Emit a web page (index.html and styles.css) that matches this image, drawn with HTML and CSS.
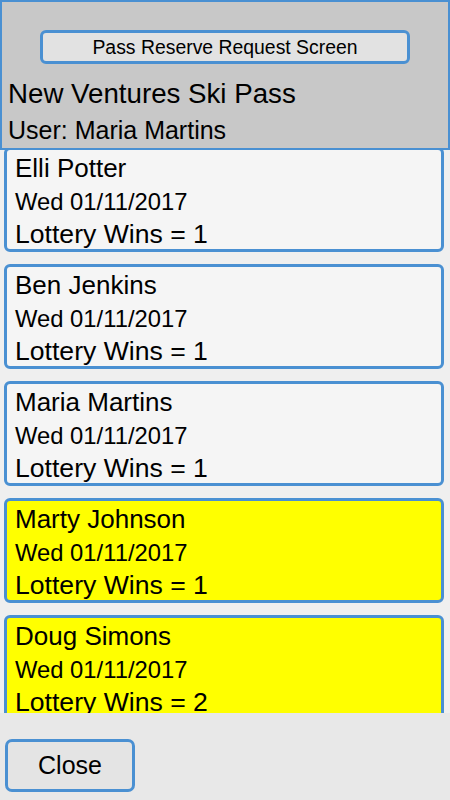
FILE: index.html
```html
<!DOCTYPE html>
<html lang="en">
<head>
    <meta charset="UTF-8">
    <meta name="viewport" content="width=device-width, initial-scale=1.0">
    <title>Pass Reserve Request</title>
    <link rel="stylesheet" href="styles.css">
</head>
<body>
    <div class="screen">
        <div class="header">
            <button class="title-button">Pass Reserve Request Screen</button>
            <div class="app-title">New Ventures Ski Pass</div>
            <div class="user-line">User: Maria Martins</div>
        </div>
        <div class="request-list">
            <div class="request-card">
                <div class="name">Elli Potter</div>
                <div class="date">Wed 01/11/2017</div>
                <div class="wins">Lottery Wins = 1</div>
            </div>
            <div class="request-card">
                <div class="name">Ben Jenkins</div>
                <div class="date">Wed 01/11/2017</div>
                <div class="wins">Lottery Wins = 1</div>
            </div>
            <div class="request-card">
                <div class="name">Maria Martins</div>
                <div class="date">Wed 01/11/2017</div>
                <div class="wins">Lottery Wins = 1</div>
            </div>
            <div class="request-card highlighted">
                <div class="name">Marty Johnson</div>
                <div class="date">Wed 01/11/2017</div>
                <div class="wins">Lottery Wins = 1</div>
            </div>
            <div class="request-card highlighted">
                <div class="name">Doug Simons</div>
                <div class="date">Wed 01/11/2017</div>
                <div class="wins">Lottery Wins = 2</div>
            </div>
        </div>
        <div class="footer">
            <button class="close-button">Close</button>
        </div>
    </div>
</body>
</html>
```

FILE: styles.css
```css
body {
    margin: 0;
    font-family: "Liberation Sans", Arial, sans-serif;
    color: black;
    background-color: #efefef;
}

.screen {
    display: flex;
    flex-direction: column;
    width: 450px;
    height: 800px;
    overflow: hidden;
}

/* верхня сіра панель */
.header {
    height: 150px;
    box-sizing: border-box;
    background-color: #c8c8c8;
    border: 2px solid #4a90d2;
    padding: 0 0 0 6px;
    display: flex;
    flex-direction: column;
}

.title-button {
    align-self: flex-start;
    margin: 28px 0 0 32px;
    width: 370px;
    height: 34px;
    box-sizing: border-box;
    background-color: #e2e2e2;
    border: 3px solid #4a90d2;
    border-radius: 6px;
    font-family: inherit;
    font-size: 19.4px;
    color: black;
    padding: 0;
}

.app-title {
    margin-top: 13px;
    font-size: 27.7px;
    line-height: 34px;
}

.user-line {
    margin-top: 1px;
    font-size: 25px;
    line-height: 36px;
}

/* список запитів */
.request-list {
    height: 563px;
    overflow: hidden;
    padding: 0 6px 0 4px;
}

.request-card {
    height: 105px;
    box-sizing: border-box;
    background-color: #f5f5f5;
    border: 3px solid #4a90d2;
    border-radius: 6px;
    padding: 2px 8px 0;
    margin-bottom: 12px;
}

.request-card:first-child {
    margin-top: -3px;
}

.request-card.highlighted {
    background-color: #ffff00;
}

.name {
    font-size: 26px;
    line-height: 33px;
}

.wins {
    font-size: 26.6px;
    line-height: 33px;
}

.date {
    font-size: 23.8px;
    line-height: 33px;
}

.footer {
    flex: 1;
    background-color: #e8e8e8;
    padding: 26px 0 0 5px;
}

.close-button {
    width: 130px;
    height: 53px;
    box-sizing: border-box;
    background-color: #e4e4e4;
    border: 3px solid #4a90d2;
    border-radius: 7px;
    font-family: inherit;
    font-size: 25px;
    color: black;
    padding: 0;
}
```
